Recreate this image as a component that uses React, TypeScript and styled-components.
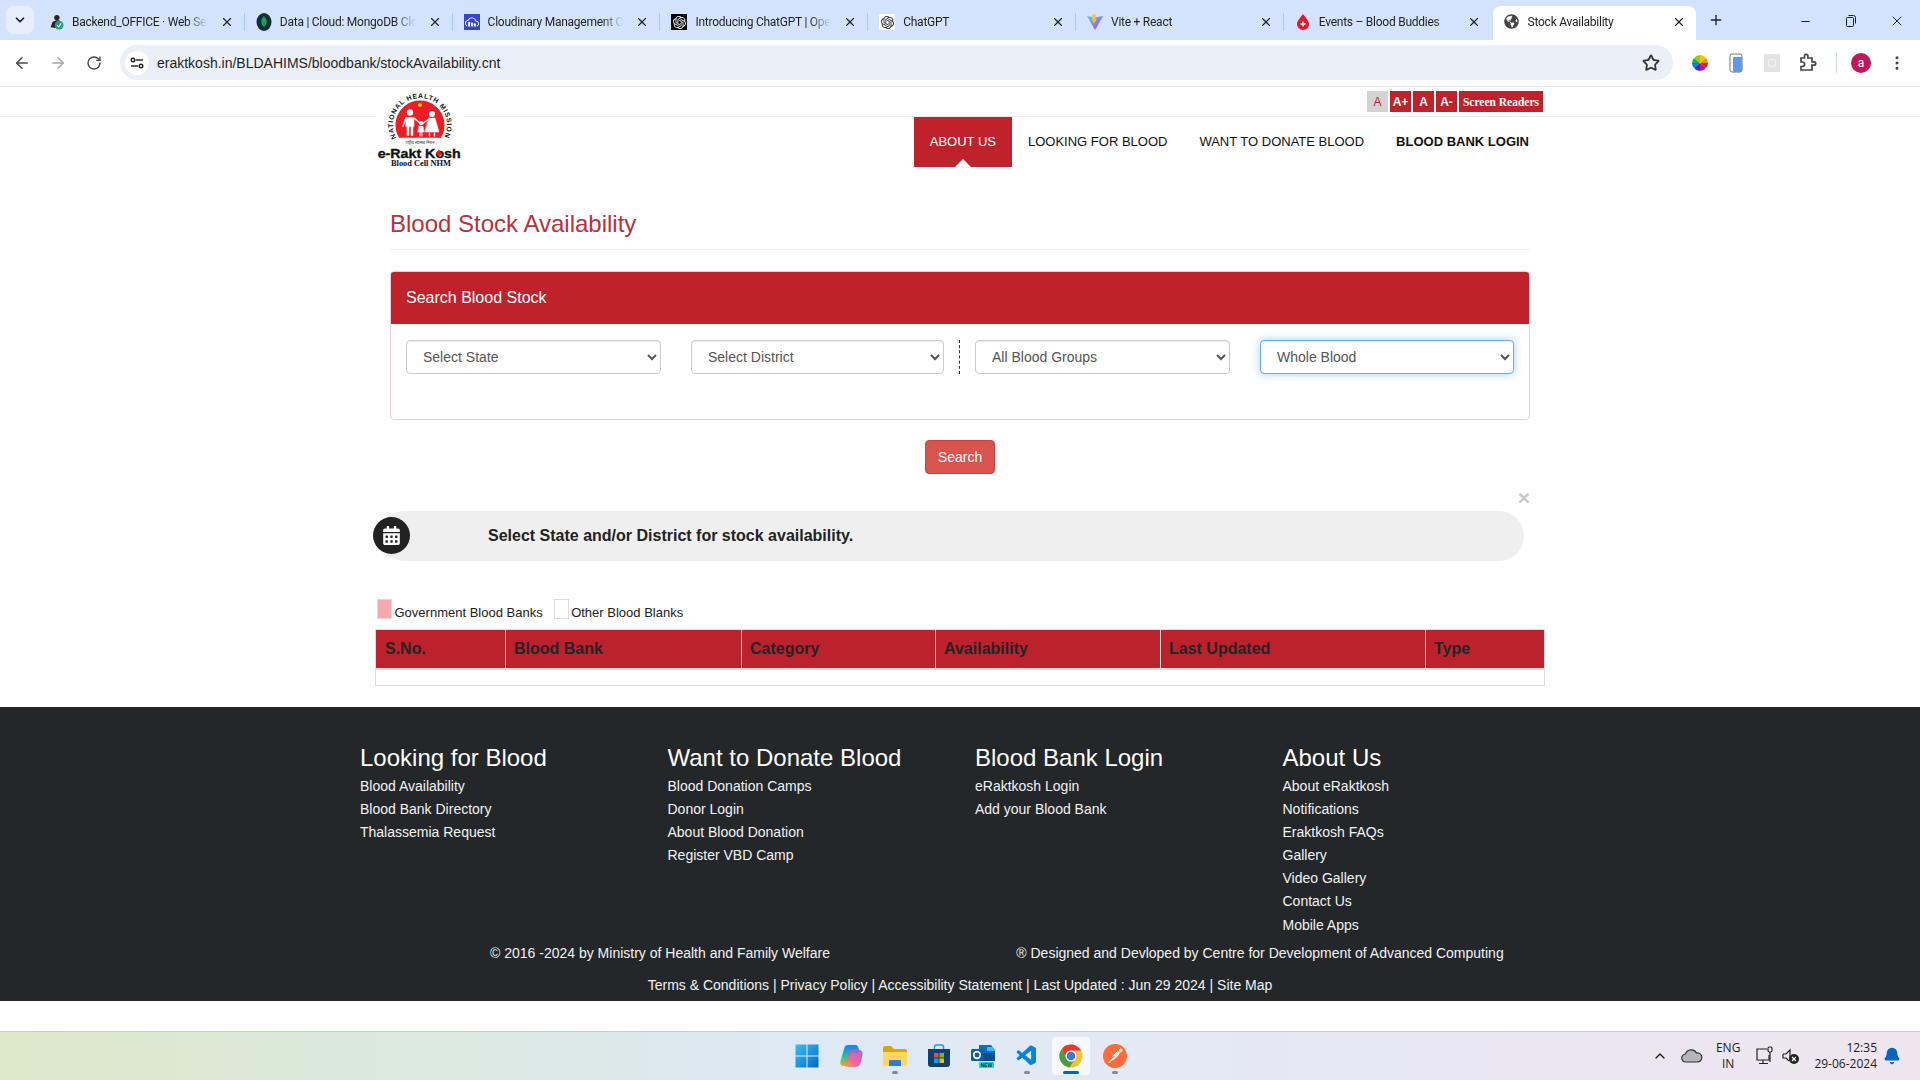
import { ReactNode } from "react";
import styled, { createGlobalStyle } from "styled-components";
import {
  ArrowLeft,
  ArrowRight,
  Bell,
  ChevronDown,
  ChevronUp,
  EllipsisVertical,
  Minus,
  Plus,
  RotateCw,
  Star,
  X,
} from "lucide-react";
import { FaCalendarAlt, FaGlobeAmericas } from "react-icons/fa";
import { SiCloudinary, SiMongodb, SiOpenai, SiPostman } from "react-icons/si";
import { VscVscode } from "react-icons/vsc";

const GlobalStyle = createGlobalStyle`
  html, body {
    margin: 0;
    height: 1080px;
    overflow: hidden;
    background: #fff;
    font-family: "Liberation Sans", Arial, sans-serif;
  }
  * { box-sizing: border-box; }
`;

const Screen = styled.div`
  width: 1920px;
  height: 1080px;
  display: flex;
  flex-direction: column;
`;

/* browser chrome */
const TabStrip = styled.div`
  height: 40px;
  flex: none;
  background: #d3e3fd;
  display: flex;
  align-items: flex-end;
  padding-left: 6px;
  font-family: Roboto, sans-serif;
  font-size: 12px;
  letter-spacing: -0.25px;
  color: #1f1f1f;
`;

const TabListButton = styled.div`
  width: 28px;
  height: 28px;
  margin: 0 3px 6px 0;
  border-radius: 8px;
  background: #e6eefc;
  display: flex;
  align-items: center;
  justify-content: center;
`;

const Tab = styled.div<{ $active?: boolean; $last?: boolean }>`
  position: relative;
  width: ${(p) => (p.$active ? "203px" : "207.8px")};
  height: 34px;
  flex: none;
  display: flex;
  align-items: center;
  margin-left: ${(p) => (p.$active ? "1px" : "0")};
  padding: 0 ${(p) => (p.$active ? "10px" : "11px")} 3px 11px;
  gap: 8px;
  border-radius: 8px 8px 0 0;
  background: ${(p) => (p.$active ? "#fff" : "transparent")};

  &::after {
    content: "";
    display: ${(p) => (p.$last || p.$active ? "none" : "block")};
    position: absolute;
    right: 0;
    top: 7px;
    width: 1px;
    height: 18px;
    background: #a8c7fa;
  }
`;

const Favicon = styled.span`
  width: 16px;
  height: 16px;
  flex: none;
  display: flex;
  align-items: center;
  justify-content: center;
`;

const TabTitle = styled.span`
  flex: 1;
  min-width: 0;
  padding-right: 3px;
  white-space: nowrap;
  overflow: hidden;
  mask-image: linear-gradient(to right, #000 82%, transparent 97%);
`;

const NewTab = styled.div`
  width: 28px;
  height: 28px;
  margin: 0 0 6px 6px;
  display: flex;
  align-items: center;
  justify-content: center;
`;

const WindowControls = styled.div`
  margin-left: auto;
  align-self: stretch;
  display: flex;
  padding-top: 2px;
`;

const WindowButton = styled.div`
  width: 46px;
  display: flex;
  align-items: center;
  justify-content: center;
`;

const Toolbar = styled.div`
  height: 47px;
  flex: none;
  background: #fff;
  border-bottom: 1px solid #e3e3e3;
  display: flex;
  align-items: center;
  padding: 0 4px 1px;
  color: #474747;
`;

const ToolButton = styled.div<{ $dim?: boolean }>`
  width: 36px;
  height: 34px;
  flex: none;
  display: flex;
  align-items: center;
  justify-content: center;
  color: ${(p) => (p.$dim ? "#a5a7aa" : "#474747")};
`;

const AddressBar = styled.div`
  width: 1553px;
  height: 35px;
  flex: none;
  margin: 0 9px 0 8px;
  padding: 0 13px 0 5px;
  border-radius: 18px;
  background: #ebeff7;
  display: flex;
  align-items: center;
  gap: 8px;
`;

const SiteInfo = styled.div`
  width: 24px;
  height: 24px;
  border-radius: 50%;
  background: #fff;
  color: #1f1f1f;
  display: flex;
  align-items: center;
  justify-content: center;
`;

const Url = styled.span`
  flex: 1;
  font-family: "Liberation Sans", sans-serif;
  font-size: 14px;
  color: #1f1f1f;
`;

const ToolSeparator = styled.div`
  width: 1px;
  height: 20px;
  margin: 0 6px 0 10px;
  background: #c7d8f4;
`;

const Avatar = styled.div`
  width: 20px;
  height: 20px;
  border-radius: 50%;
  background: #c2185b;
  color: #fff;
  font-family: Roboto, sans-serif;
  font-size: 12px;
  display: flex;
  align-items: center;
  justify-content: center;
`;

/* page */
const Page = styled.div`
  flex: 1;
  min-height: 0;
  display: flex;
  flex-direction: column;
  background: #fff;
`;

const AccessBar = styled.div`
  height: 30px;
  flex: none;
  border-bottom: 1px solid #eaeaea;
  display: flex;
  justify-content: flex-end;
  padding: 4px 377px 0 0;
  gap: 2px;
`;

const SizeButton = styled.button<{ $current?: boolean }>`
  width: 21px;
  height: 21px;
  padding: 0;
  border: 0;
  background: ${(p) => (p.$current ? "#d3d3d3" : "#bf222b")};
  color: ${(p) => (p.$current ? "#bf222b" : "#fff")};
  font: ${(p) => (p.$current ? "400" : "700")} 12px "Liberation Sans", sans-serif;
`;

const ReaderButton = styled.button`
  width: 84px;
  height: 21px;
  padding: 0;
  border: 0;
  background: #bf222b;
  color: #fff;
  font: 700 11.5px "Liberation Serif", serif;
`;

const Wrap = styled.div`
  position: relative;
  width: 1200px;
  margin: 0 auto;
`;

const LogoLink = styled.a`
  position: absolute;
  left: 15px;
  top: -25px;
  width: 90px;
  height: 76px;
  background: #fff;
  display: block;
`;

const MainNav = styled.nav`
  height: 50px;
  display: flex;
  justify-content: flex-end;
  padding-right: 15px;
`;

const NavItem = styled.a<{ $active?: boolean; $strong?: boolean }>`
  position: relative;
  padding: 0 16px 2px;
  display: flex;
  align-items: center;
  height: 50px;
  font-size: 13px;
  font-weight: ${(p) => (p.$strong ? 700 : 400)};
  color: ${(p) => (p.$active ? "#fff" : "#111")};
  background: ${(p) => (p.$active ? "#bf222b" : "transparent")};

  &::after {
    content: "";
    display: ${(p) => (p.$active ? "block" : "none")};
    position: absolute;
    left: 50%;
    bottom: 0;
    margin-left: -8px;
    border: 8px solid transparent;
    border-top: 0;
    border-bottom-color: #fff;
  }
`;

const Section = styled.section`
  margin: 42px 30px 0;
`;

const PageTitle = styled.h2`
  margin: 0;
  padding-bottom: 11px;
  border-bottom: 1px solid #eee;
  font-size: 24px;
  line-height: 29px;
  font-weight: 400;
  color: #b5333c;
`;

const Card = styled.div`
  margin-top: 21px;
  height: 149px;
  border: 1px solid #ebcdd3;
  border-radius: 4px;
  overflow: hidden;
`;

const CardHeader = styled.div`
  height: 53px;
  margin: -1px -1px 0;
  padding: 0 16px;
  background: #bf222b;
  color: #fff;
  font-size: 16px;
  display: flex;
  align-items: center;
`;

const FilterRow = styled.div`
  padding: 16px 15px 0;
  display: flex;
  gap: 30px;
`;

const FilterCell = styled.div<{ $width: number; $divider?: boolean }>`
  flex: none;
  ${(p) => (p.$divider ? "padding-right: 15px; margin-right: -15px; border-right: 1px dashed #333;" : "")}
  width: ${(p) => p.$width + (p.$divider ? 16 : 0)}px;
`;

const Select = styled.select<{ $focused?: boolean }>`
  width: 100%;
  height: 34px;
  padding: 6px 12px;
  border: 1px solid ${(p) => (p.$focused ? "#66afe9" : "#ccc")};
  border-radius: 4px;
  background: #fff;
  color: #555;
  font: 14px "Liberation Sans", sans-serif;
  box-shadow: ${(p) =>
    p.$focused
      ? "inset 0 1px 1px rgba(0,0,0,.075), 0 0 8px rgba(102,175,233,.6)"
      : "inset 0 1px 1px rgba(0,0,0,.075)"};
  outline: none;
`;

const SearchRow = styled.div`
  margin-top: 20px;
  display: flex;
  justify-content: center;
`;

const SearchButton = styled.button`
  width: 70px;
  height: 34px;
  border: 1px solid #d43f3a;
  border-radius: 4px;
  background: #d9534f;
  color: #fff;
  font: 14px "Liberation Sans", sans-serif;
`;

const AlertBox = styled.div`
  position: relative;
  margin: 37px 36px 0 19px;
  height: 50px;
  border-radius: 25px;
  background: #efefef;
  display: flex;
  align-items: center;
  padding-left: 109px;
  font-size: 16px;
  font-weight: 700;
  color: #222;
`;

const AlertIcon = styled.span`
  position: absolute;
  left: -6px;
  top: 6px;
  width: 37px;
  height: 37px;
  border-radius: 50%;
  background: #222;
  color: #fff;
  display: flex;
  align-items: center;
  justify-content: center;
`;

const AlertClose = styled.span`
  position: absolute;
  right: -6px;
  top: -24px;
  font-size: 21px;
  line-height: 21px;
  font-weight: 700;
  color: #c8c8c8;
`;

const Legend = styled.div`
  margin: 38px 15px 0 17px;
  height: 20px;
  display: flex;
  align-items: flex-end;
  font-size: 13px;
  line-height: 15px;
  color: #222;
`;

const Swatch = styled.span<{ $fill: string }>`
  width: 15px;
  height: 20px;
  margin-right: 2.5px;
  border: 1px solid #ddd;
  background: ${(p) => p.$fill};
`;

const LegendLabel = styled.span`
  margin-right: 11px;
  margin-bottom: -1px;
`;

const StockTable = styled.table`
  display: table;
  margin: 10px 15px 0;
  width: 1169px;
  table-layout: fixed;
  border-collapse: collapse;

  th {
    height: 39px;
    padding: 0 8px;
    background: #bc222b;
    border: 1px solid #ddd;
    border-bottom-width: 2px;
    color: #212529;
    font-size: 16px;
    font-weight: 700;
    text-align: left;
  }
  th:first-child {
    padding-left: 9px;
  }
  td {
    height: 17px;
    padding: 0;
    border: 1px solid #ddd;
  }
`;

const Footer = styled.footer`
  margin-top: 21px;
  height: 294px;
  flex: none;
  background: #23272a;
  color: #f2f2f2;
  padding-top: 36px;
`;

const FooterGrid = styled.div`
  display: grid;
  grid-template-columns: repeat(4, 307.5px);
  height: 196.5px;
`;

const FooterHeading = styled.h4`
  margin: 0 0 3px;
  font-size: 24px;
  line-height: 29px;
  font-weight: 400;
  color: #fff;
`;

const FooterLink = styled.a`
  display: block;
  font-size: 14px;
  line-height: 23.1px;
`;

const CopyRow = styled.div`
  display: grid;
  grid-template-columns: 1fr 1fr;
  text-align: center;
  font-size: 14px;
  line-height: 20px;
  margin-top: 3px;
`;

const LegalRow = styled.div`
  margin-top: 12px;
  text-align: center;
  font-size: 14px;
  line-height: 20px;
`;

const PageBottom = styled.div`
  flex: 1;
  background: #fff;
`;

/* windows taskbar */
const Taskbar = styled.div`
  height: 49px;
  flex: none;
  border-top: 1px solid #c9ccd3;
  background: linear-gradient(90deg, #dde8c9 0%, #dbe9dc 18%, #dde9f3 40%, #e3e9f5 60%, #ece6f1 85%, #efe5ee 100%);
  display: grid;
  grid-template-columns: 1fr auto 1fr;
  align-items: center;
`;

const TaskIcons = styled.div`
  display: flex;
  margin-left: 2px;
`;

const TaskIcon = styled.div<{ $active?: boolean; $running?: boolean }>`
  position: relative;
  width: 44px;
  height: 38px;
  display: flex;
  align-items: center;
  justify-content: center;

  &::before {
    content: "";
    display: ${(p) => (p.$active ? "block" : "none")};
    position: absolute;
    left: 3px;
    right: 3px;
    top: 0;
    bottom: 0;
    border-radius: 4px;
    background: #f6f9fd;
  }
  &::after {
    content: "";
    display: ${(p) => (p.$running || p.$active ? "block" : "none")};
    position: absolute;
    left: 50%;
    bottom: 1px;
    width: ${(p) => (p.$active ? "16px" : "6px")};
    height: 3px;
    margin-left: ${(p) => (p.$active ? "-8px" : "-3px")};
    border-radius: 2px;
    background: ${(p) => (p.$active ? "#0067c0" : "#858a90")};
  }
  & > * {
    position: relative;
  }
`;

const Tray = styled.div`
  display: flex;
  align-items: center;
  justify-content: flex-end;
  padding-right: 19px;
  gap: 13px;
  font-family: "Open Sans", sans-serif;
  font-size: 12px;
  color: #1c1c1c;
`;

const TrayIcon = styled.span<{ $shift?: number }>`
  display: flex;
  align-items: center;
  justify-content: center;
  margin-left: ${(p) => p.$shift ?? 0}px;
`;

const TrayText = styled.div<{ $align: string }>`
  line-height: 16px;
  text-align: ${(p) => p.$align};
`;

const BlueBell = styled(Bell)`
  margin-left: -7px;
  color: #0067c0;
  fill: #0067c0;
`;

const Logo = () => (
  <svg width="90" height="76" viewBox="0 0 90 76">
    <defs>
      <path id="ring" d="M21.3 46A27 27 0 1 1 68.7 46" />
    </defs>
    <text fontFamily="Liberation Sans" fontWeight="700" fontSize="6.8" fill="#111">
      <textPath href="#ring" textLength="110">
        NATIONAL HEALTH MISSION
      </textPath>
    </text>
    <path d="M24 45.7A24.5 24.5 0 1 1 66 45.7Z" fill="#ee1c25" />
    <circle cx="45" cy="13" r="2" fill="#ffd200" />
    <g fill="#fff" stroke="#fff" strokeLinecap="round">
      <circle cx="35" cy="20.5" r="3.2" stroke="none" />
      <path d="M31 25.5h8v9h-1v9h-2v-9h-2v9h-2v-9h-1z" strokeWidth=".5" />
      <path d="M31 26l-3 8M39 26l7 6" strokeWidth="1.6" fill="none" />
      <circle cx="57" cy="22" r="3" stroke="none" />
      <path d="M54 26h6l4 14h-14z" strokeWidth=".5" />
      <path d="M54.500 41v3M59.500 41v3" strokeWidth="1.300" />
      <path d="M54 27l-7 5" strokeWidth="1.300" fill="none" />
      <circle cx="46" cy="31" r="2.100" stroke="none" />
      <path d="M44 34h4l1 6h-6z" strokeWidth=".4" />
      <path d="M45 40v4M47 40v4" strokeWidth="1" />
    </g>
    <text x="45" y="52" textAnchor="middle" fontFamily="Noto Sans" fontSize="4" fill="#333">
      राष्ट्रीय स्वास्थ्य मिशन
    </text>
    <text
      x="2.700"
      y="65.500"
      textLength="83"
      lengthAdjust="spacingAndGlyphs"
      fontFamily="Liberation Sans"
      fontWeight="700"
      fontSize="13.500"
      stroke="#111"
      strokeWidth=".35"
      fill="#111"
    >
      e-Rakt Kosh
    </text>
    <path d="M64 57.500c1.400 2 2.200 3 2.200 4.300a2.200 2.200 0 0 1-4.400 0c0-1.300.8-2.300 2.200-4.300z" fill="#e01b24" />
    <text
      x="16"
      y="73.700"
      textLength="60"
      lengthAdjust="spacingAndGlyphs"
      fontFamily="Liberation Serif"
      fontWeight="700"
      fontSize="7.500"
      fill="#0a0a2a"
    >
      Blood Cell NHM
    </text>
  </svg>
);

const BackendFav = () => (
  <svg width="18" height="18" viewBox="0 0 18 18">
    <circle cx="10" cy="4" r="3" fill="#222" />
    <path d="M3 15l2-6 4-2h4v4l-3 5z" fill="#222" />
    <circle cx="12.500" cy="12.500" r="5" fill="#16a37a" />
    <path d="M10 12.500l2 2 3-4" stroke="#fff" strokeWidth="1.400" fill="none" />
  </svg>
);

const MongoFav = () => (
  <svg width="16" height="18" viewBox="0 0 16 18">
    <ellipse cx="8" cy="9" rx="7.500" ry="9" fill="#0b2f36" />
    <foreignObject x="2" y="3" width="12" height="12">
      <SiMongodb size={12} color="#13aa52" />
    </foreignObject>
  </svg>
);

const CloudinaryFav = () => (
  <svg width="16" height="16" viewBox="0 0 16 16">
    <rect width="16" height="16" fill="#3448c5" />
    <foreignObject x="1" y="1" width="14" height="14">
      <SiCloudinary size={14} color="#fff" />
    </foreignObject>
  </svg>
);

const OpenAiFav = ({ dark }: { dark: boolean }) => (
  <svg width="16" height="16" viewBox="0 0 16 16">
    <rect width="16" height="16" fill={dark ? "#000" : "#fff"} rx={dark ? 0 : 2} />
    <foreignObject x="1.500" y="1.500" width="13" height="13">
      <SiOpenai size={13} color={dark ? "#fff" : "#222"} />
    </foreignObject>
  </svg>
);

const ViteFav = () => (
  <svg width="16" height="16" viewBox="0 0 16 16">
    <defs>
      <linearGradient id="vt" x1="0" y1="0" x2="1" y2="1">
        <stop offset="0" stopColor="#41d1ff" />
        <stop offset="1" stopColor="#bd34fe" />
      </linearGradient>
    </defs>
    <path d="M0 2l8 14 8-14-8 1.500z" fill="url(#vt)" />
    <path d="M9 0l-4 1 .5 7 1.500-.5-.3 3 3-5.500-1.600.4z" fill="#ffc517" />
  </svg>
);

const DropFav = () => (
  <svg width="14" height="16" viewBox="0 0 14 16">
    <path d="M7 0c3 4 6 7 6 10.300A6 5.700 0 0 1 1 10.300C1 7 4 4 7 0z" fill="#e8132d" />
    <path d="M7 7.500v5M4.500 10h5" stroke="#fff" strokeWidth="1.400" />
  </svg>
);

const TuneIcon = () => (
  <svg width="14" height="14" viewBox="0 0 14 14" fill="none" stroke="#1f1f1f" strokeWidth="1.400">
    <circle cx="3" cy="4" r="1.800" />
    <path d="M6 4h7" />
    <circle cx="11" cy="10" r="1.800" />
    <path d="M1 10h7" />
  </svg>
);

const PuzzleIcon = () => (
  <svg width="18" height="20" viewBox="0 0 18 20" fill="none" stroke="#474747" strokeWidth="1.700">
    <path d="M2 5h3.500V3a1.700 1.700 0 0 1 3.400 0v2H13v3.800h2a1.700 1.700 0 0 1 0 3.400h-2V17H2v-3.500h1.300a2 2 0 0 0 0-4.500H2z" />
  </svg>
);

const WindowsIcon = () => (
  <svg width="24" height="24" viewBox="0 0 24 24">
    <defs>
      <linearGradient id="wi" x1="0" y1="0" x2="1" y2="1">
        <stop offset="0" stopColor="#35c2f5" />
        <stop offset="1" stopColor="#0767c6" />
      </linearGradient>
    </defs>
    <path d="M.5.500h11v11H.5zM12.500.500h11v11h-11zM.5 12.500h11v11H.5zM12.500 12.500h11v11h-11z" fill="url(#wi)" />
  </svg>
);

const CopilotIcon = () => (
  <svg width="24" height="24" viewBox="0 0 24 24">
    <defs>
      <linearGradient id="cp1" x1="0" y1="0" x2="0" y2="1">
        <stop offset="0" stopColor="#1b7ff0" />
        <stop offset=".55" stopColor="#27c2a0" />
        <stop offset="1" stopColor="#f5a623" />
      </linearGradient>
      <linearGradient id="cp2" x1="1" y1="0" x2="0" y2="1">
        <stop offset="0" stopColor="#a855f7" />
        <stop offset=".6" stopColor="#f0568f" />
        <stop offset="1" stopColor="#ff9a3c" />
      </linearGradient>
    </defs>
    <path d="M9 1h7c2 0 3 1 3.500 3l1 5H14c-2 0-3 1-3.500 3l-1.500 7c-.4 2-2 3-4 3-3 0-4-2-3.500-5L5 5c.5-2.500 2-4 4-4z" fill="url(#cp1)" />
    <path d="M15 23H8c-1 0-2-.5-1.500-1.500l4-13c.5-1.500 1.500-2.500 3.500-2.500h6c2.500 0 4 2 3.500 5l-1.500 7c-.6 3-3 5-7 5z" fill="url(#cp2)" opacity=".9" />
  </svg>
);

const FolderIcon = () => (
  <svg width="24" height="24" viewBox="0 0 24 24">
    <path d="M0 4a2 2 0 0 1 2-2h6l3 3h11a2 2 0 0 1 2 2v2H0z" fill="#d9a412" />
    <path d="M0 8h24v12a2 2 0 0 1-2 2H2a2 2 0 0 1-2-2z" fill="#ffd75e" />
    <path d="M6 17a1 1 0 0 1 1-1h10a1 1 0 0 1 1 1v5H6z" fill="#2a80c9" />
  </svg>
);

const StoreIcon = () => (
  <svg width="24" height="24" viewBox="0 0 24 24">
    <path d="M7.500 5V3a2 2 0 0 1 2-2h5a2 2 0 0 1 2 2v2" fill="none" stroke="#1aa0dc" strokeWidth="1.500" />
    <path d="M1 5h22v15a3 3 0 0 1-3 3H4a3 3 0 0 1-3-3z" fill="#113f73" />
    <path d="M7 9h4.500v4.500H7z" fill="#f25022" />
    <path d="M12.500 9H17v4.500h-4.500z" fill="#7fba00" />
    <path d="M7 14.500h4.500V19H7z" fill="#00a4ef" />
    <path d="M12.500 14.500H17V19h-4.500z" fill="#ffb900" />
  </svg>
);

const OutlookIcon = () => (
  <svg width="24" height="24" viewBox="0 0 24 24">
    <path d="M8 1h12l4 5v9H8z" fill="#0f6cbd" />
    <path d="M16 3h6l2 4h-8z" fill="#49b3f0" />
    <path d="M8 9h16v8H8z" fill="#0a4f94" />
    <rect y="5" width="12" height="12" rx="1.500" fill="#0a5dab" />
    <circle cx="6" cy="11" r="3.300" fill="none" stroke="#fff" strokeWidth="1.700" />
    <rect x="8" y="18" width="15" height="6" rx="1" fill="#1fd6d0" />
    <text x="15.500" y="23" textAnchor="middle" fontFamily="Liberation Sans" fontWeight="700" fontSize="5" fill="#07343f">
      NEW
    </text>
  </svg>
);

const ChromeIcon = () => (
  <svg width="24" height="24" viewBox="0 0 24 24">
    <circle cx="12" cy="12" r="11.500" fill="#fbc02d" />
    <path d="M3 4.700A11.500 11.500 0 0 1 22 6.500H12A5.500 5.500 0 0 0 7.240 14.750z" fill="#e53935" />
    <path d="M3 4.700A11.500 11.500 0 0 0 10.600 23.400L14.750 16.760A5.500 5.500 0 0 1 7.240 14.750z" fill="#43a047" />
    <circle cx="12" cy="12" r="5.500" fill="#fff" />
    <circle cx="12" cy="12" r="4.300" fill="#3f78e0" />
  </svg>
);

const PostmanIcon = () => (
  <svg width="24" height="24" viewBox="0 0 24 24">
    <circle cx="12" cy="12" r="11" fill="#fff" />
    <foreignObject width="24" height="24">
      <SiPostman size={24} color="#ff6c37" />
    </foreignObject>
  </svg>
);

const OneDriveIcon = () => (
  <svg width="22" height="14" viewBox="0 0 22 14">
    <path d="M5 13a4 4 0 0 1-.5-8A6 6 0 0 1 15.500 4 4.500 4.500 0 0 1 17 13z" fill="#b4b6ba" stroke="#333" strokeWidth="1.200" />
  </svg>
);

const NetworkIcon = () => (
  <svg width="20" height="20" viewBox="0 0 20 20" fill="none" stroke="#222" strokeWidth="1.200">
    <path d="M12 3H2v11h12V9" />
    <path d="M8 14v3M4 17.500h9" />
    <rect x="13" y="1" width="4" height="5" rx="1.500" />
    <path d="M15 6v10" />
  </svg>
);

const MutedIcon = () => (
  <svg width="20" height="20" viewBox="0 0 20 20">
    <path d="M2 8h3l4-4v9" fill="none" stroke="#222" strokeWidth="1.200" />
    <path d="M2 8v4h3l3 3" fill="none" stroke="#222" strokeWidth="1.200" />
    <circle cx="13" cy="13" r="5" fill="#222" />
    <path d="M11 11l4 4M15 11l-4 4" stroke="#fff" strokeWidth="1.200" />
  </svg>
);

const RestoreIcon = () => (
  <svg width="12" height="14" viewBox="0 0 12 14" fill="none" stroke="#1f1f1f">
    <rect x="1.500" y="3.500" width="7" height="9" rx="1" />
    <path d="M3.500 1.500h5a2 2 0 0 1 2 2v6" />
  </svg>
);

const PhoneExtIcon = () => (
  <svg width="14" height="20" viewBox="0 0 14 20">
    <rect x="1" y="1" width="12" height="18" rx="2" fill="#fff" stroke="#777" />
    <rect x="4" y="4" width="9" height="15" rx="1" fill="#5b9bea" />
  </svg>
);

const WheelExtIcon = () => (
  <svg width="16" height="18" viewBox="0 0 16 18">
    <path d="M8 9V1a8 8 0 0 1 6 3z" fill="#f6c400" />
    <path d="M8 9l6-5a8 8 0 0 1 2 5z" fill="#f08a00" />
    <path d="M8 9h8a8 8 0 0 1-2 5z" fill="#e02020" />
    <path d="M8 9l6 5a8 8 0 0 1-6 3z" fill="#c0139c" />
    <path d="M8 9v8a8 8 0 0 1-6-3z" fill="#3a2bd0" />
    <path d="M8 9l-6 5a8 8 0 0 1-2-5z" fill="#1478e0" />
    <path d="M8 9H0a8 8 0 0 1 2-5z" fill="#12b04c" />
    <path d="M8 9L2 4a8 8 0 0 1 6-3z" fill="#8fcf10" />
  </svg>
);

const GreyExtIcon = () => (
  <svg width="16" height="18" viewBox="0 0 16 18">
    <rect width="16" height="18" fill="#e3e3e3" />
    <circle cx="8" cy="9" r="4" fill="none" stroke="#f5f5f5" />
  </svg>
);

type TabInfo = { title: string; icon: ReactNode };

const tabs: TabInfo[] = [
  { title: "Backend_OFFICE · Web Service", icon: <BackendFav /> },
  { title: "Data | Cloud: MongoDB Cloud", icon: <MongoFav /> },
  { title: "Cloudinary Management Console", icon: <CloudinaryFav /> },
  { title: "Introducing ChatGPT | OpenAI", icon: <OpenAiFav dark /> },
  { title: "ChatGPT", icon: <OpenAiFav dark={false} /> },
  { title: "Vite + React", icon: <ViteFav /> },
  { title: "Events – Blood Buddies", icon: <DropFav /> },
];

const footerColumns = [
  {
    title: "Looking for Blood",
    links: ["Blood Availability", "Blood Bank Directory", "Thalassemia Request"],
  },
  {
    title: "Want to Donate Blood",
    links: ["Blood Donation Camps", "Donor Login", "About Blood Donation", "Register VBD Camp"],
  },
  {
    title: "Blood Bank Login",
    links: ["eRaktkosh Login", "Add your Blood Bank"],
  },
  {
    title: "About Us",
    links: [
      "About eRaktkosh",
      "Notifications",
      "Eraktkosh FAQs",
      "Gallery",
      "Video Gallery",
      "Contact Us",
      "Mobile Apps",
    ],
  },
];

const tableColumns = [
  { label: "S.No.", width: 130 },
  { label: "Blood Bank", width: 236 },
  { label: "Category", width: 194 },
  { label: "Availability", width: 225 },
  { label: "Last Updated", width: 265 },
  { label: "Type", width: 119 },
];

const App = () => {
  return (
    <Screen>
      <GlobalStyle />
      <TabStrip>
        <TabListButton>
          <ChevronDown size={14} strokeWidth={3} />
        </TabListButton>
        {tabs.map((tab, index) => (
          <Tab key={tab.title} $last={index === tabs.length - 1}>
            <Favicon>{tab.icon}</Favicon>
            <TabTitle>{tab.title}</TabTitle>
            <X size={14} strokeWidth={2} />
          </Tab>
        ))}
        <Tab $active>
          <Favicon>
            <FaGlobeAmericas size={15} color="#444" />
          </Favicon>
          <TabTitle>Stock Availability</TabTitle>
          <X size={14} strokeWidth={2} />
        </Tab>
        <NewTab>
          <Plus size={16} strokeWidth={2} />
        </NewTab>
        <WindowControls>
          <WindowButton>
            <Minus size={13} />
          </WindowButton>
          <WindowButton>
            <RestoreIcon />
          </WindowButton>
          <WindowButton>
            <X size={16} strokeWidth={1.5} />
          </WindowButton>
        </WindowControls>
      </TabStrip>

      <Toolbar>
        <ToolButton>
          <ArrowLeft size={18} />
        </ToolButton>
        <ToolButton $dim>
          <ArrowRight size={18} />
        </ToolButton>
        <ToolButton>
          <RotateCw size={16} />
        </ToolButton>
        <AddressBar>
          <SiteInfo>
            <TuneIcon />
          </SiteInfo>
          <Url>eraktkosh.in/BLDAHIMS/bloodbank/stockAvailability.cnt</Url>
          <Star size={18} strokeWidth={2.4} color="#333" />
        </AddressBar>
        <ToolButton>
          <WheelExtIcon />
        </ToolButton>
        <ToolButton>
          <PhoneExtIcon />
        </ToolButton>
        <ToolButton>
          <GreyExtIcon />
        </ToolButton>
        <ToolButton>
          <PuzzleIcon />
        </ToolButton>
        <ToolSeparator />
        <ToolButton>
          <Avatar>a</Avatar>
        </ToolButton>
        <ToolButton>
          <EllipsisVertical size={18} />
        </ToolButton>
      </Toolbar>

      <Page>
        <AccessBar>
          <SizeButton $current>A</SizeButton>
          <SizeButton>A+</SizeButton>
          <SizeButton>A</SizeButton>
          <SizeButton>A-</SizeButton>
          <ReaderButton>Screen Readers</ReaderButton>
        </AccessBar>
        <Wrap>
          <LogoLink>
            <Logo />
          </LogoLink>
          <MainNav>
            <NavItem $active>ABOUT US</NavItem>
            <NavItem>LOOKING FOR BLOOD</NavItem>
            <NavItem>WANT TO DONATE BLOOD</NavItem>
            <NavItem $strong>BLOOD BANK LOGIN</NavItem>
          </MainNav>
          <Section>
            <PageTitle>Blood Stock Availability</PageTitle>
            <Card>
              <CardHeader>Search Blood Stock</CardHeader>
              <FilterRow>
                <FilterCell $width={255}>
                  <Select defaultValue="state">
                    <option value="state">Select State</option>
                  </Select>
                </FilterCell>
                <FilterCell $width={253} $divider>
                  <Select defaultValue="district">
                    <option value="district">Select District</option>
                  </Select>
                </FilterCell>
                <FilterCell $width={255}>
                  <Select defaultValue="all">
                    <option value="all">All Blood Groups</option>
                  </Select>
                </FilterCell>
                <FilterCell $width={254}>
                  <Select $focused defaultValue="whole">
                    <option value="whole">Whole Blood</option>
                  </Select>
                </FilterCell>
              </FilterRow>
            </Card>
            <SearchRow>
              <SearchButton>Search</SearchButton>
            </SearchRow>
          </Section>
          <AlertBox>
            <AlertIcon>
              <FaCalendarAlt size={19} />
            </AlertIcon>
            Select State and/or District for stock availability.
            <AlertClose>×</AlertClose>
          </AlertBox>
          <Legend>
            <Swatch $fill="#f4a9b0" />
            <LegendLabel>Government Blood Banks</LegendLabel>
            <Swatch $fill="#fff" />
            <LegendLabel>Other Blood Blanks</LegendLabel>
          </Legend>
          <StockTable>
            <colgroup>
              {tableColumns.map((col) => (
                <col key={col.label} style={{ width: col.width }} />
              ))}
            </colgroup>
            <thead>
              <tr>
                {tableColumns.map((col) => (
                  <th key={col.label}>{col.label}</th>
                ))}
              </tr>
            </thead>
            <tbody>
              <tr>
                <td colSpan={6} />
              </tr>
            </tbody>
          </StockTable>
        </Wrap>
        <Footer>
          <Wrap>
            <FooterGrid>
              {footerColumns.map((col) => (
                <div key={col.title}>
                  <FooterHeading>{col.title}</FooterHeading>
                  {col.links.map((link) => (
                    <FooterLink key={link}>{link}</FooterLink>
                  ))}
                </div>
              ))}
            </FooterGrid>
            <CopyRow>
              <span>© 2016 -2024 by Ministry of Health and Family Welfare</span>
              <span>® Designed and Devloped by Centre for Development of Advanced Computing</span>
            </CopyRow>
            <LegalRow>
              Terms &amp; Conditions | Privacy Policy | Accessibility Statement | Last Updated : Jun 29 2024 | Site Map
            </LegalRow>
          </Wrap>
        </Footer>
        <PageBottom />
      </Page>

      <Taskbar>
        <div />
        <TaskIcons>
          <TaskIcon>
            <WindowsIcon />
          </TaskIcon>
          <TaskIcon>
            <CopilotIcon />
          </TaskIcon>
          <TaskIcon $running>
            <FolderIcon />
          </TaskIcon>
          <TaskIcon>
            <StoreIcon />
          </TaskIcon>
          <TaskIcon>
            <OutlookIcon />
          </TaskIcon>
          <TaskIcon $running>
            <VscVscode size={24} color="#0a84d6" />
          </TaskIcon>
          <TaskIcon $active>
            <ChromeIcon />
          </TaskIcon>
          <TaskIcon $running>
            <PostmanIcon />
          </TaskIcon>
        </TaskIcons>
        <Tray>
          <TrayIcon>
            <ChevronUp size={16} />
          </TrayIcon>
          <TrayIcon>
            <OneDriveIcon />
          </TrayIcon>
          <TrayText $align="center">
            ENG
            <br />
            IN
          </TrayText>
          <TrayIcon $shift={2}>
            <NetworkIcon />
          </TrayIcon>
          <TrayIcon $shift={-7}>
            <MutedIcon />
          </TrayIcon>
          <TrayText $align="right">
            12:35
            <br />
            29-06-2024
          </TrayText>
          <BlueBell size={18} />
        </Tray>
      </Taskbar>
    </Screen>
  );
};

export default App;
